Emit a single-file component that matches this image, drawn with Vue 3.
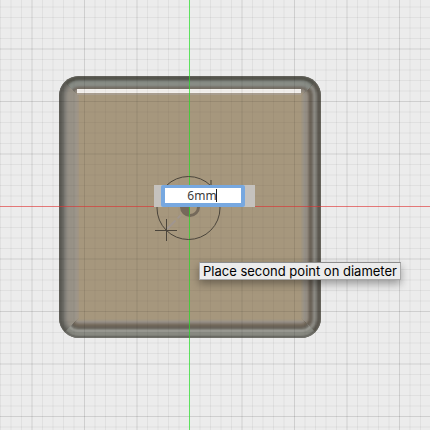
<script setup>
import { ref } from 'vue'

const diameter = ref('6mm')

const edge = { left: 59, top: 76, size: 262, radius: 20 }

const range = (from, to) => Array.from({ length: to - from + 1 }, (_, i) => from + i)
const lines = (origin, from, to) =>
  range(from, to)
    .filter((n) => n !== 0)
    .map((n) => ({ at: origin + n * 10.5, major: n % 5 === 0 }))

const columns = lines(189.5, -18, 22)
const rows = lines(206.5, -19, 21)

// Bevel shades, one per pixel, from the outer edge inwards
const sides = [
  {
    name: 'left',
    clip: '59,76 190,207 59,338',
    shades: ['#5f5e58', '#5a5953', '#5f5e58', '#66655f', '#706f69', '#797771', '#827f78', '#8a867e', '#918c83', '#958f85', '#979186', '#979186', '#979186', '#989287', '#989287', '#999388', '#9b9489', '#9d9589', '#9f9587', '#a19584', '#a39680'],
  },
  {
    name: 'right',
    clip: '321,76 190,207 321,338',
    shades: ['#65635b', '#5b5850', '#5d5951', '#67645d', '#77756e', '#86857e', '#8b8982', '#85817a', '#78736a', '#6e675d', '#6b6358', '#70685d', '#7f766b', '#8c8479', '#938c81', '#979086', '#99938a', '#9a9385', '#9e9483', '#a1957f', '#a4967e'],
  },
  {
    name: 'top',
    clip: '59,76 321,76 190,207',
    shades: ['#62615a', '#55554d', '#54544c', '#5c5d55', '#70736c', '#7d817b', '#858982', '#888c85', '#888b85', '#858780', '#7d7b74', '#77726a', '#756f65', '#8c857b', '#918a7e', '#958d80', '#9a9080', '#a0947f', '#a5967e'],
  },
  {
    name: 'bottom',
    clip: '59,338 321,338 190,207',
    shades: ['#70706a', '#696963', '#7d7e77', '#86877f', '#888981', '#8b8c85', '#96968f', '#979790', '#85847d', '#716e65', '#69635a', '#6b6358', '#706759', '#796f62', '#847b70', '#928a80', '#9b9388', '#9f9583', '#a3967f'],
  },
]
</script>

<template>
  <main class="viewport">
    <svg class="scene" viewBox="0 0 430 430" preserveAspectRatio="xMidYMid slice" aria-hidden="true">
      <defs>
        <clipPath v-for="side in sides" :id="`side-${side.name}`" :key="side.name">
          <polygon :points="side.clip" />
        </clipPath>
        <clipPath id="body-shape">
          <rect x="59" y="76" width="262" height="262" rx="20" />
        </clipPath>
      </defs>

      <g class="grid floor">
        <line v-for="c in columns" :key="`c${c.at}`" :class="{ major: c.major }" :x1="c.at" :x2="c.at" y1="0" y2="430" />
        <line v-for="r in rows" :key="`r${r.at}`" :class="{ major: r.major }" x1="0" x2="430" :y1="r.at" :y2="r.at" />
      </g>

      <rect x="59" y="76" width="262" height="262" rx="20" fill="#686760" />
      <g v-for="side in sides" :key="side.name" :clip-path="`url(#side-${side.name})`">
        <rect
          v-for="(shade, i) in side.shades"
          :key="i"
          :x="edge.left + i"
          :y="edge.top + i"
          :width="edge.size - 2 * i"
          :height="edge.size - 2 * i"
          :rx="Math.max(edge.radius - i, 2)"
          :fill="shade"
        />
      </g>
      <rect x="79" y="94" width="222" height="225" fill="#a6977d" />
      <rect x="77" y="93" width="224" height="2" fill="#a99e90" />
      <rect x="77" y="89" width="224" height="4" fill="#f3f0ed" />

      <g class="grid body" clip-path="url(#body-shape)">
        <line v-for="c in columns" :key="`c${c.at}`" :class="{ major: c.major }" :x1="c.at" :x2="c.at" y1="0" y2="430" />
        <line v-for="r in rows" :key="`r${r.at}`" :class="{ major: r.major }" x1="0" x2="430" :y1="r.at" :y2="r.at" />
      </g>

      <rect x="0" y="206" width="430" height="1" fill="#df3030" fill-opacity=".62" />
      <path d="M180 207a10 10 0 0 0 10 10v-10z" fill="#75695a" />
      <path d="M198.5 207a8.500 8.500 0 0 1-8.500 8.500" fill="none" stroke="#75695a" stroke-width="3" />
      <rect x="189" y="0" width="1" height="430" fill="#22dd22" fill-opacity=".7" />
      <path d="M167 229l14-14" stroke="#a0968f" stroke-width="2" stroke-dasharray="12 3" />
      <circle cx="188.5" cy="208" r="31.5" fill="none" stroke="#4b453b" />
      <path d="M211 180V185" fill="none" stroke="#4b453b" />
      <path d="M155 230.5H177M166.5 219V241" stroke="#4b453b" />
    </svg>

    <form class="dimension" @submit.prevent>
      <label class="field">
        <input v-model="diameter" class="value" type="text" aria-label="Diameter" spellcheck="false" />
        <span class="caret"></span>
      </label>
    </form>

    <div class="tooltip" role="tooltip">Place second point on diameter</div>
  </main>
</template>

<style>
body {
  margin: 0;
  background: #ececec;
}
</style>

<style scoped>
.viewport {
  position: relative;
  height: 100vh;
  overflow: hidden;
  background: #ececec;
}

.scene {
  display: block;
  width: 100%;
  height: 100%;
}

.grid line {
  stroke: #000;
  stroke-opacity: 0.05;
}

.grid .major {
  stroke-opacity: 0.12;
}

.body line {
  stroke-opacity: 0.035;
}

.body .major {
  stroke-opacity: 0.09;
}

.dimension {
  position: absolute;
  top: calc(50% - 30px);
  left: calc(50% - 61px);
  box-sizing: border-box;
  width: 101px;
  padding: 0 10px 0 7px;
  background: #c5c2be;
}

.field {
  position: relative;
  display: block;
  width: 76px;
  padding: 3px 4px 4px;
  border-radius: 2px;
  background: #77a8e0;
}

.value {
  display: block;
  box-sizing: border-box;
  width: 100%;
  height: 15px;
  padding: 0 2px 0 0;
  border: 0;
  outline: 0;
  background: #fff;
  color: #3c3c3c;
  font: 12px/15px "Noto Sans", "Open Sans", sans-serif;
  text-align: center;
  caret-color: transparent;
}

.caret {
  position: absolute;
  top: 4px;
  left: 55px;
  width: 1px;
  height: 13px;
  background: #222;
}

.tooltip {
  position: absolute;
  top: calc(50% + 47px);
  left: calc(50% - 16px);
  box-sizing: border-box;
  padding: 0 3px;
  border: 1px solid #a9a9a9;
  border-top-color: #8d8d8d;
  background: #ececec;
  box-shadow: 0 4px 8px rgba(0, 0, 0, 0.35);
  color: #000;
  font: 13px/16px Inter, "Liberation Sans", sans-serif;
  white-space: nowrap;
}
</style>
